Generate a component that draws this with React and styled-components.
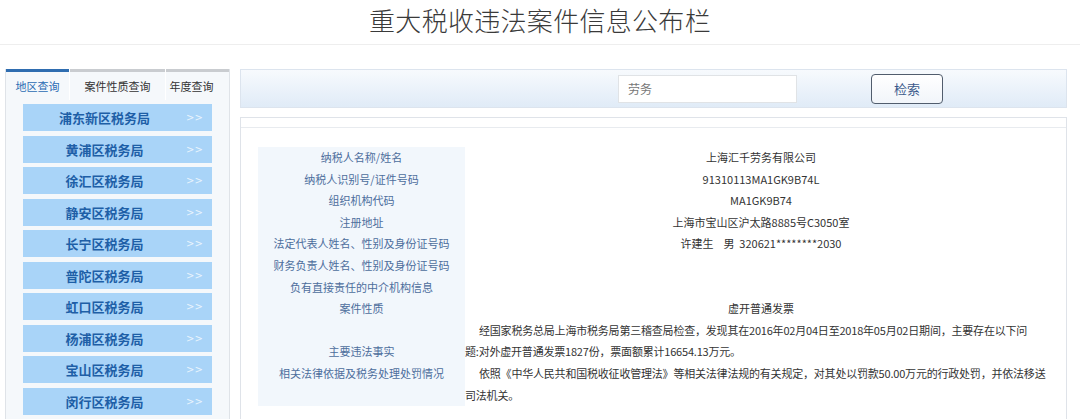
import React from "react";
import styled, { createGlobalStyle } from "styled-components";

const GlobalStyle = createGlobalStyle`
  html, body {
    margin: 0;
    padding: 0;
    background: #fff;
    overflow: hidden;
  }
  body {
    font-family: "Noto Sans CJK SC", "Noto Sans", sans-serif;
  }
`;

const Page = styled.div`
  width: 1080px;
  height: 419px;
  overflow: hidden;
`;

const Header = styled.header`
  height: 44px;
  border-bottom: 1px solid #eeeeee;
  display: flex;
  justify-content: center;
`;

const Title = styled.h1`
  margin: 0;
  font-size: 26px;
  line-height: 40px;
  font-weight: 300;
  color: #3a3a3a;
  letter-spacing: 0.3px;
`;

const Main = styled.div`
  display: flex;
  gap: 10px;
  padding: 24px 13px 0 5px;
`;

const Sidebar = styled.aside`
  width: 225px;
  height: 360px;
  flex-shrink: 0;
  box-sizing: border-box;
  border-left: 1px solid #dfe3e8;
  border-right: 1px solid #dfe3e8;
  background: #f5f8fb;
`;

const Tabs = styled.div`
  display: grid;
  grid-template-columns: 63px 95px 63px;
  gap: 1px;
  background: #fff;
`;

const Tab = styled.div`
  border-top: 3px solid ${(p) => (p.$active ? "#2f6db0" : "#c9ccd0")};
  background: #f5f8fb;
  height: 28px;
  line-height: 28px;
  font-size: 11px;
  text-align: center;
  color: ${(p) => (p.$active ? "#2a6bb3" : "#333")};
  padding-right: ${(p) => p.$shift || 0}px;
`;

const DistrictList = styled.div`
  display: flex;
  flex-direction: column;
  gap: 4.5px;
  padding: 4px 17px 0;
`;

const District = styled.div`
  height: 27px;
  display: flex;
  align-items: center;
  background: #a9d4f8;
`;

const DistrictName = styled.span`
  flex: 1;
  text-align: center;
  font-size: 13px;
  font-weight: 700;
  color: #1e5fa7;
`;

const Arrow = styled.span`
  width: 26px;
  font-size: 10px;
  color: rgba(255, 255, 255, 0.75);
  font-family: "DejaVu Sans", sans-serif;
`;

const Right = styled.section`
  flex: 1;
  display: flex;
  flex-direction: column;
`;

const SearchBar = styled.div`
  height: 39px;
  box-sizing: border-box;
  border: 1px solid #dce4ee;
  background: linear-gradient(to bottom, #f7fafd, #e0ebf7);
  display: flex;
  align-items: center;
  padding-left: 377px;
`;

const SearchInput = styled.input`
  width: 179px;
  height: 28px;
  box-sizing: border-box;
  border: 1px solid #e0e3e6;
  background: #fff;
  padding: 0 9px;
  font-family: inherit;
  font-size: 12px;
  color: #777;
  outline: none;
`;

const SearchButton = styled.button`
  margin-left: 74px;
  width: 72px;
  height: 30px;
  box-sizing: border-box;
  border: 1px solid #515d6d;
  border-radius: 4px;
  background: linear-gradient(to bottom, #ffffff, #f1f5fa);
  color: #3c5a8c;
  font-family: inherit;
  font-size: 13px;
  cursor: pointer;
`;

const ContentBox = styled.div`
  margin-top: 9px;
  border: 1px solid #dfe3e9;
  border-bottom: none;
  height: 320px;
`;

const Strip = styled.div`
  height: 9px;
  border-bottom: 1px solid #e8ebef;
`;

const InfoTable = styled.div`
  display: grid;
  grid-template-columns: 207px 1fr;
  margin: 19px 9px 0 17px;
  font-size: 11px;
  line-height: 21.6px;
`;

const Label = styled.div`
  background: #f2f7fc;
  color: #4d6e9c;
  display: flex;
  justify-content: center;
  align-items: ${(p) => p.$align || "center"};
  white-space: nowrap;
`;

const Value = styled.div`
  color: #333;
  text-align: center;
  white-space: pre;
  min-height: 21.6px;
`;

const LongText = styled.div`
  color: #333;
  text-align: left;
  white-space: nowrap;
  letter-spacing: -0.2px;
`;

const Line = styled.div`
  text-indent: ${(p) => (p.$indent ? "14px" : "0")};
`;

const districts = [
  "浦东新区",
  "黄浦区",
  "徐汇区",
  "静安区",
  "长宁区",
  "普陀区",
  "虹口区",
  "杨浦区",
  "宝山区",
  "闵行区",
];

const rows = [
  ["纳税人名称/姓名", "上海汇千劳务有限公司"],
  ["纳税人识别号/证件号码", "91310113MA1GK9B74L"],
  ["组织机构代码", "MA1GK9B74"],
  ["注册地址", "上海市宝山区沪太路8885号C3050室"],
  ["法定代表人姓名、性别及身份证号码", "许建生    男  320621********2030"],
  ["财务负责人姓名、性别及身份证号码", ""],
  ["负有直接责任的中介机构信息", ""],
  ["案件性质", "虚开普通发票"],
];

export default function App() {
  return (
    <Page>
      <GlobalStyle />
      <Header>
        <Title>重大税收违法案件信息公布栏</Title>
      </Header>
      <Main>
        <Sidebar>
          <Tabs>
            <Tab $active>地区查询</Tab>
            <Tab>案件性质查询</Tab>
            <Tab $shift={12}>年度查询</Tab>
          </Tabs>
          <DistrictList>
            {districts.map((d) => (
              <District key={d}>
                <DistrictName>{d}税务局</DistrictName>
                <Arrow>&gt;&gt;</Arrow>
              </District>
            ))}
          </DistrictList>
        </Sidebar>
        <Right>
          <SearchBar>
            <SearchInput defaultValue="劳务" readOnly />
            <SearchButton>检索</SearchButton>
          </SearchBar>
          <ContentBox>
            <Strip />
            <InfoTable>
              {rows.map(([label, value]) => (
                <React.Fragment key={label}>
                  <Label>{label}</Label>
                  <Value>{value}</Value>
                </React.Fragment>
              ))}
              <Label $align="flex-end">主要违法事实</Label>
              <LongText>
                <Line $indent>
                  经国家税务总局上海市税务局第三稽查局检查，发现其在2016年02月04日至2018年05月02日期间，主要存在以下问
                </Line>
                <Line>题:对外虚开普通发票1827份，票面额累计16654.13万元。</Line>
              </LongText>
              <Label $align="flex-start">相关法律依据及税务处理处罚情况</Label>
              <LongText>
                <Line $indent>
                  依照《中华人民共和国税收征收管理法》等相关法律法规的有关规定，对其处以罚款50.00万元的行政处罚，并依法移送
                </Line>
                <Line>司法机关。</Line>
              </LongText>
            </InfoTable>
          </ContentBox>
        </Right>
      </Main>
    </Page>
  );
}
